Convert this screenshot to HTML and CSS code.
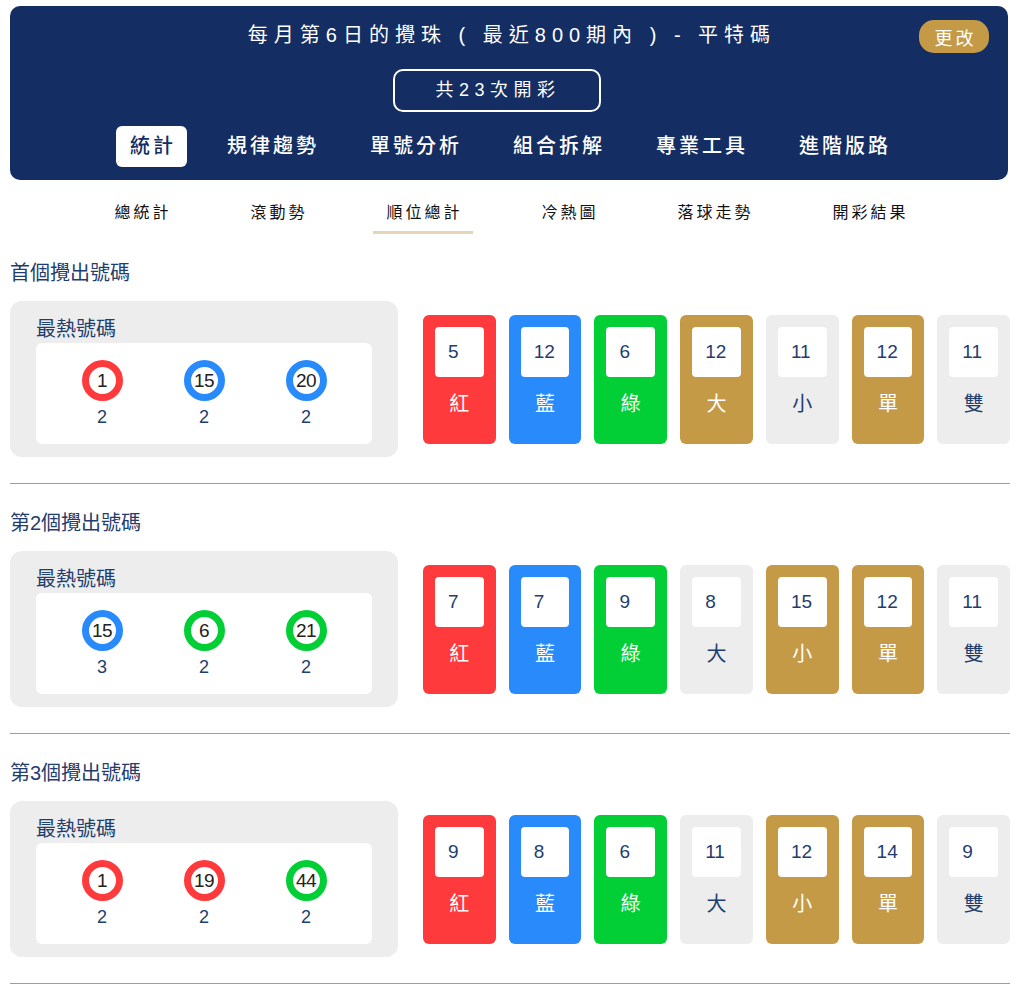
FILE: index.html
```html
<!DOCTYPE html>
<html lang="zh-Hant">

<head>
    <meta charset="UTF-8">
    <meta name="viewport" content="width=device-width, initial-scale=1.0">
    <title>順位總計</title>
    <link rel="stylesheet" href="styles.css">
</head>

<body>
    <div class="pagina">
        <header class="cabecalho">
            <h1 class="titulo">每月第6日的攪珠 ( 最近800期內 ) - 平特碼</h1>
            <button class="btn-mudar">更改</button>
            <div class="total">共23次開彩</div>
            <nav class="menu">
                <a class="ativo">統計</a>
                <a>規律趨勢</a>
                <a>單號分析</a>
                <a>組合拆解</a>
                <a>專業工具</a>
                <a>進階版路</a>
            </nav>
        </header>

        <nav class="submenu">
            <a>總統計</a>
            <a>滾動勢</a>
            <a class="ativo">順位總計</a>
            <a>冷熱圖</a>
            <a>落球走勢</a>
            <a>開彩結果</a>
        </nav>

        <!-- primeiro -->
        <section class="bloco">
            <h2>首個攪出號碼</h2>
            <div class="linha">
                <div class="quente">
                    <h3>最熱號碼</h3>
                    <div class="bolas">
                        <div class="item"><span class="bola vermelho">1</span><span class="vezes">2</span></div>
                        <div class="item"><span class="bola azul">15</span><span class="vezes">2</span></div>
                        <div class="item"><span class="bola azul">20</span><span class="vezes">2</span></div>
                    </div>
                </div>
                <div class="cartoes">
                    <div class="cartao vermelho"><div class="num">5</div><span>紅</span></div>
                    <div class="cartao azul"><div class="num">12</div><span>藍</span></div>
                    <div class="cartao verde"><div class="num">6</div><span>綠</span></div>
                    <div class="cartao ouro"><div class="num">12</div><span>大</span></div>
                    <div class="cartao cinza"><div class="num">11</div><span>小</span></div>
                    <div class="cartao ouro"><div class="num">12</div><span>單</span></div>
                    <div class="cartao cinza"><div class="num">11</div><span>雙</span></div>
                </div>
            </div>
        </section>

        <!-- segundo -->
        <section class="bloco">
            <h2>第2個攪出號碼</h2>
            <div class="linha">
                <div class="quente">
                    <h3>最熱號碼</h3>
                    <div class="bolas">
                        <div class="item"><span class="bola azul">15</span><span class="vezes">3</span></div>
                        <div class="item"><span class="bola verde">6</span><span class="vezes">2</span></div>
                        <div class="item"><span class="bola verde">21</span><span class="vezes">2</span></div>
                    </div>
                </div>
                <div class="cartoes">
                    <div class="cartao vermelho"><div class="num">7</div><span>紅</span></div>
                    <div class="cartao azul"><div class="num">7</div><span>藍</span></div>
                    <div class="cartao verde"><div class="num">9</div><span>綠</span></div>
                    <div class="cartao cinza"><div class="num">8</div><span>大</span></div>
                    <div class="cartao ouro"><div class="num">15</div><span>小</span></div>
                    <div class="cartao ouro"><div class="num">12</div><span>單</span></div>
                    <div class="cartao cinza"><div class="num">11</div><span>雙</span></div>
                </div>
            </div>
        </section>

        <!-- terceiro -->
        <section class="bloco">
            <h2>第3個攪出號碼</h2>
            <div class="linha">
                <div class="quente">
                    <h3>最熱號碼</h3>
                    <div class="bolas">
                        <div class="item"><span class="bola vermelho">1</span><span class="vezes">2</span></div>
                        <div class="item"><span class="bola vermelho">19</span><span class="vezes">2</span></div>
                        <div class="item"><span class="bola verde">44</span><span class="vezes">2</span></div>
                    </div>
                </div>
                <div class="cartoes">
                    <div class="cartao vermelho"><div class="num">9</div><span>紅</span></div>
                    <div class="cartao azul"><div class="num">8</div><span>藍</span></div>
                    <div class="cartao verde"><div class="num">6</div><span>綠</span></div>
                    <div class="cartao cinza"><div class="num">11</div><span>大</span></div>
                    <div class="cartao ouro"><div class="num">12</div><span>小</span></div>
                    <div class="cartao ouro"><div class="num">14</div><span>單</span></div>
                    <div class="cartao cinza"><div class="num">9</div><span>雙</span></div>
                </div>
            </div>
        </section>
    </div>
</body>

</html>
```

FILE: styles.css
```css
/* Estilos gerais */
body {
    font-family: "Liberation Sans", "Noto Sans CJK TC", sans-serif;
    margin: 0;
    padding: 0;
    background-color: #fff;
    color: #1f3d6e;
}

.pagina {
    padding: 6px 14px 0 10px;
}

/* Cabecalho azul */
header.cabecalho {
    position: relative;
    background-color: #142d62;
    color: white;
    border-radius: 10px;
    margin-right: 2px;
    padding: 14px 0 13px;
    display: flex;
    flex-direction: column;
    align-items: center;
}

.titulo {
    margin: 0;
    padding-left: 6px;
    font-size: 20px;
    font-weight: normal;
    line-height: 30px;
    letter-spacing: 6px;
}

.btn-mudar {
    position: absolute;
    top: 14px;
    right: 19px;
    width: 70px;
    height: 33px;
    border: none;
    border-radius: 15px;
    background-color: #c49a47;
    color: white;
    font-family: inherit;
    font-size: 18px;
    letter-spacing: 3px;
    padding: 0 0 0 3px;
}

.total {
    margin: 19px 24px 0 0;
    border: 2px solid white;
    border-radius: 10px;
    padding: 6px 38px 6px 40px;
    font-size: 18px;
    line-height: 27px;
    letter-spacing: 5.5px;
}

.menu {
    margin-top: 14px;
    display: flex;
    gap: 26px;
}

.menu a {
    padding: 6px 11px 6px 14px;
    font-size: 20px;
    font-weight: 500;
    line-height: 29px;
    letter-spacing: 3px;
    border-radius: 6px;
}

.menu a.ativo {
    background-color: white;
    color: #142d62;
}

/* Submenu */
.submenu {
    margin-top: 13px;
    display: flex;
    justify-content: center;
    gap: 56px;
}

.submenu a {
    padding: 8px 10px 6px 13px;
    font-size: 16px;
    line-height: 24px;
    letter-spacing: 3px;
    color: #111;
    border-bottom: 3px solid transparent;
}

.submenu a.ativo {
    border-bottom-color: #e6d4b2;
}

/* Blocos */
.bloco {
    padding: 25px 0 26px;
    border-bottom: 1px solid #c49a47;
}

.bloco h2 {
    margin: 0 0 14px;
    font-size: 20px;
    font-weight: normal;
    line-height: 28px;
}

.linha {
    display: flex;
    align-items: center;
    gap: 25px;
}

.quente {
    flex: 0 0 388px;
    box-sizing: border-box;
    background-color: #ededed;
    border-radius: 12px;
    padding: 16px 26px 13px;
}

.quente h3 {
    margin: 0 0 2px;
    font-size: 20px;
    font-weight: normal;
    line-height: 24px;
}

.bolas {
    background-color: white;
    border-radius: 6px;
    padding: 17px 0 16px;
    display: grid;
    grid-template-columns: repeat(3, 102px);
    justify-content: center;
}

.item {
    display: flex;
    flex-direction: column;
    align-items: center;
}

.bola {
    width: 41px;
    height: 41px;
    box-sizing: border-box;
    border: 7px solid;
    border-radius: 50%;
    background-color: white;
    color: #222;
    font-size: 19px;
    line-height: 27px;
    text-align: center;
    letter-spacing: -0.5px;
}

.bola.vermelho { border-color: #ff3a3d; }
.bola.azul { border-color: #288afb; }
.bola.verde { border-color: #02cf35; }

.vezes {
    margin-top: 5px;
    font-size: 18px;
    line-height: 22px;
}

/* Cartoes */
.cartoes {
    flex: 1;
    display: flex;
    gap: 13px;
}

.cartao {
    flex: 1;
    height: 129px;
    box-sizing: border-box;
    border-radius: 6px;
    padding: 12px 12px 0;
    text-align: center;
    color: white;
}

.cartao .num {
    height: 50px;
    background-color: white;
    border-radius: 4px;
    color: #1f3d6e;
    text-align: left;
    padding-left: 13px;
    font-size: 19px;
    line-height: 50px;
}

.cartao span {
    display: block;
    margin-top: 15px;
    font-size: 20px;
    line-height: 24px;
}

.cartao.vermelho { background-color: #ff3a3d; }
.cartao.azul { background-color: #288afb; }
.cartao.verde { background-color: #02cf35; }
.cartao.ouro { background-color: #c49a47; }
.cartao.cinza { background-color: #ededed; color: #1f3d6e; }
```
